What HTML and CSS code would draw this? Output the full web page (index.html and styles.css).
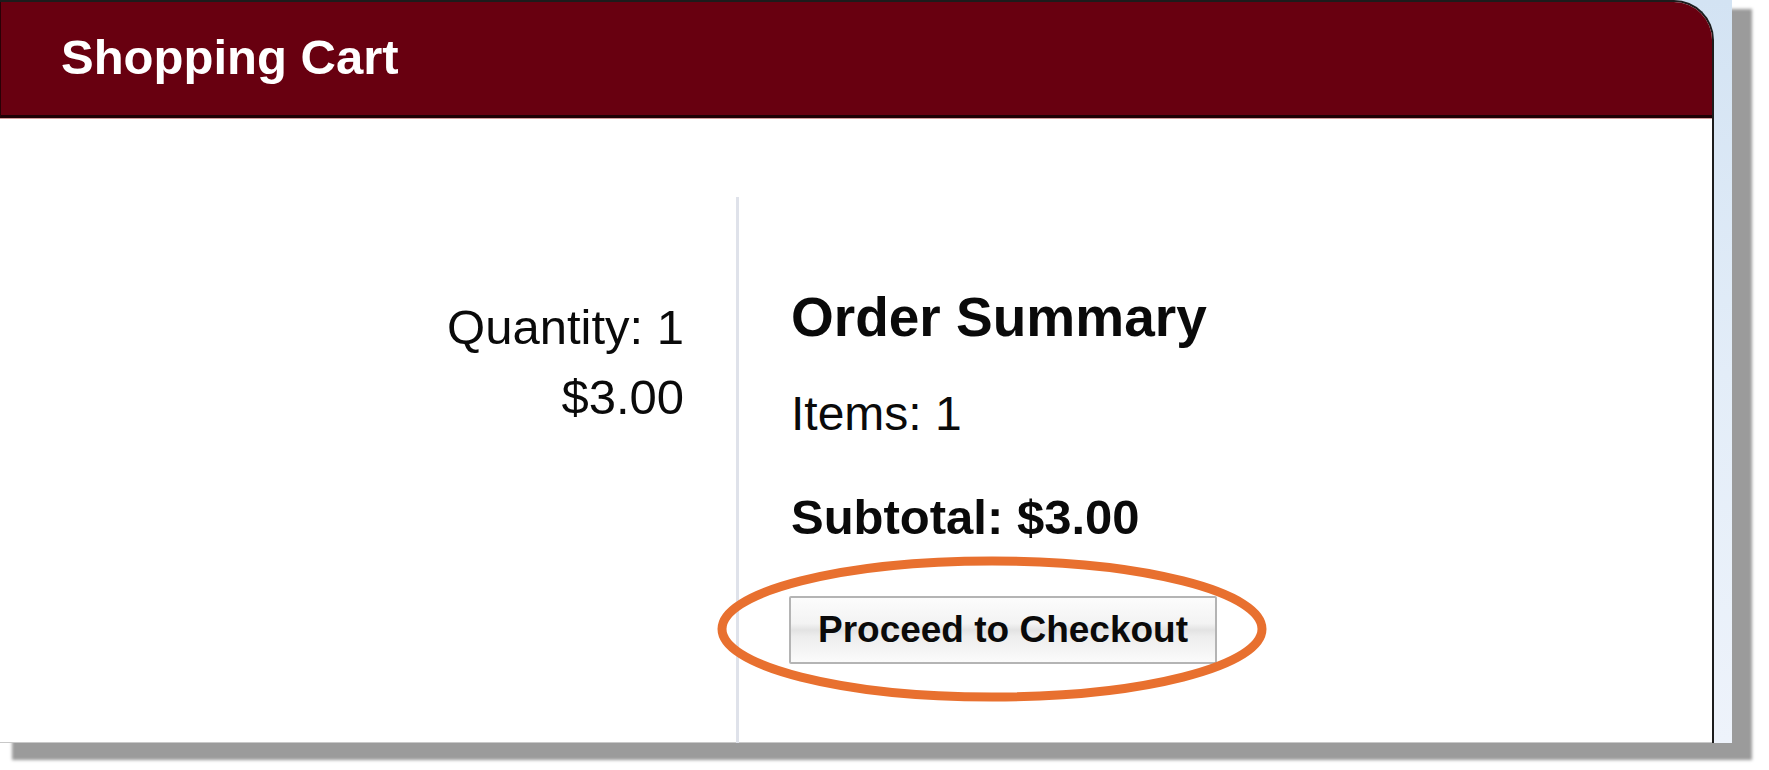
FILE: index.html
```html
<!DOCTYPE html>
<html lang="en">
<head>
<meta charset="utf-8">
<title>Shopping Cart</title>
<link rel="stylesheet" href="styles.css">
</head>
<body>
<div class="frame">
  <div class="window">
    <div class="header">
      <h1 class="title">Shopping Cart</h1>
    </div>
    <div class="content">
      <div class="item-col">
        <div class="line">Quantity: 1</div>
        <div class="line">$3.00</div>
      </div>
      <div class="summary-col">
        <h2 class="summary-title">Order Summary</h2>
        <div class="items">Items: 1</div>
        <div class="subtotal">Subtotal: $3.00</div>
        <button class="checkout" type="button">Proceed to Checkout</button>
      </div>
    </div>
  </div>
</div>
<svg class="highlight" width="560" height="156" viewBox="0 0 560 156" aria-hidden="true">
  <ellipse cx="276" cy="75" rx="270" ry="68" fill="none" stroke="#e8702f" stroke-width="9"/>
</svg>
</body>
</html>
```

FILE: styles.css
```css
html, body {
  margin: 0;
  padding: 0;
  background: #ffffff;
}

body {
  font-family: "Liberation Sans", Arial, sans-serif;
  color: #0a0a0a;
  width: 1769px;
  height: 770px;
  overflow: hidden;
}

.frame {
  width: 1732px;
  height: 743px;
  box-sizing: border-box;
  padding-right: 18px;
  background: linear-gradient(to bottom, #d3e3f3 0%, #e3edf8 50%, #eef3fb 100%);
  box-shadow: 16px 13px 3px 4px #9b9b9b;
  display: flex;
}

.window {
  flex: 1;
  display: flex;
  flex-direction: column;
  background: #ffffff;
  border-top: 2px solid #1c1c1c;
  border-right: 2px solid #1c1c1c;
  border-top-right-radius: 40px;
  overflow: hidden;
  box-shadow: inset 0 -1px 0 #c8c8c8;
}

.header {
  height: 113px;
  background: #680010;
  border-left: 1px solid #2a0006;
  border-bottom: 3px solid #1e0004;
  box-shadow: 0 1px 0 #d49a9a;
  flex: none;
}

.title {
  margin: 0;
  padding-left: 60px;
  font-size: 49px;
  line-height: 110px;
  font-weight: bold;
  color: #ffffff;
}

.content {
  flex: 1;
  display: flex;
  margin-top: 79px;
}

.item-col {
  width: 736px;
  box-sizing: border-box;
  padding-top: 95px;
  padding-right: 52px;
  text-align: right;
  font-size: 49px;
  line-height: 70px;
}

.summary-col {
  flex: 1;
  border-left: 3px solid #dfe2ea;
  padding-left: 52px;
  padding-top: 89px;
  display: flex;
  flex-direction: column;
  align-items: flex-start;
}

.summary-title {
  margin: 0;
  font-size: 55px;
  line-height: 63px;
  font-weight: bold;
}

.items {
  margin-top: 37px;
  font-size: 48px;
  line-height: 55px;
}

.subtotal {
  margin-top: 49px;
  font-size: 49px;
  line-height: 55px;
  font-weight: bold;
}

.checkout {
  margin-top: 51px;
  margin-left: -2px;
  width: 428px;
  height: 68px;
  padding: 0;
  font-family: "Liberation Sans", Arial, sans-serif;
  font-size: 37px;
  font-weight: bold;
  color: #0a0a0a;
  border: 2px solid #b4b4b4;
  border-radius: 2px;
  background: linear-gradient(to bottom, #fcfcfc 0%, #f3f3f3 40%, #e3e3e3 50%, #ededed 60%, #fbfbfb 100%);
}

.highlight {
  position: absolute;
  left: 716px;
  top: 554px;
}
```
